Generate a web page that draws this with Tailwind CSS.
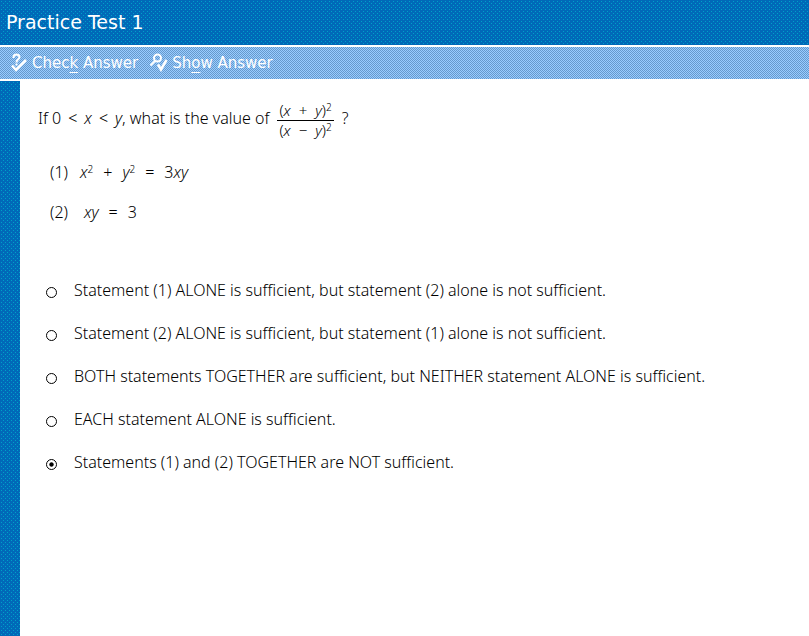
<!DOCTYPE html>
<html lang="en">
  <head>
    <meta charset="UTF-8" />
    <meta name="viewport" content="width=device-width, initial-scale=1.0" />
    <title>Practice Test 1</title>
    <script src="https://cdn.jsdelivr.net/npm/@tailwindcss/browser@4"></script>
    <style>
      .dots {
        background:
          conic-gradient(at 1px 1px, transparent 75%, #00a0c8 0) 1px 1px / 4px 4px,
          conic-gradient(at 1px 1px, transparent 75%, #00a0c8 0) 3px 3px / 4px 4px,
          #0069b8;
      }
      .checks {
        background: repeating-conic-gradient(#6699cc 0 25%, #99ccff 0 50%) 0 0 / 2px 2px;
      }
    </style>
  </head>
  <body class="flex min-h-screen flex-col bg-white font-['Noto_Sans',sans-serif] text-black">
    <header class="dots flex h-[45px] items-center px-1.5">
      <h1 class="font-['DejaVu_Sans',sans-serif] text-[19px] text-white">Practice Test 1</h1>
    </header>

    <nav class="checks my-0.5 flex h-8 items-center gap-3 px-2.5 font-['DejaVu_Sans',sans-serif] text-[15px] text-white">
      <button type="button" accesskey="k" class="flex items-center gap-1">
        <svg class="h-5 w-[18px]" viewBox="0 0 18 20" fill="none" stroke="white">
          <path d="M3.500 5V4Q4 1.500 6.500 1.500T9.500 4Q9.500 5.500 8 6.500T6.500 9.500" stroke-width="2" />
          <path d="M5.500 10.500h2v2h-2z" fill="white" stroke="none" />
          <path d="M2 12.500l4 4.500L16 7" stroke-width="2.500" />
        </svg>
        <span>Chec<u class="underline-offset-4">k</u> Answer</span>
      </button>
      <button type="button" accesskey="o" class="flex items-center gap-1">
        <svg class="h-5 w-[18px]" viewBox="0 0 18 20" fill="none" stroke="white">
          <circle cx="7.500" cy="5" r="3.500" stroke-width="2" />
          <path d="M5 8L0.500 12.500" stroke-width="2" />
          <path d="M8 11.500l3 5L16.500 7" stroke-width="2.500" />
        </svg>
        <span>Sh<u class="underline-offset-4">o</u>w Answer</span>
      </button>
    </nav>

    <div class="flex grow">
      <aside class="dots w-5 shrink-0"></aside>

      <main class="grow px-[18px] pt-5 font-light">
        <!-- Question -->
        <div class="flex gap-2">
          <p class="flex gap-[7px] pt-[5px]">
            <span>If 0</span> <span>&lt;</span> <i>x</i> <span>&lt;</span>
            <span><i>y</i>, what is the value of</span>
          </p>
          <div class="text-[15px] leading-[19px]">
            <div class="flex gap-2 border-b border-black px-0.5">
              <span>(<i>x</i></span> <span>+</span>
              <span><i>y</i>)<sup class="text-[10px]">2</sup></span>
            </div>
            <div class="flex gap-2 px-0.5">
              <span>(<i>x</i></span> <span>&minus;</span>
              <span><i>y</i>)<sup class="text-[10px]">2</sup></span>
            </div>
          </div>
          <span class="pt-[5px]">?</span>
        </div>

        <!-- Statements -->
        <div class="mt-5 ml-3 space-y-4">
          <div class="flex gap-2.5">
            <span class="w-5">(1)</span>
            <span><i>x</i><sup class="text-[10px]">2</sup></span>
            <span>+</span>
            <span><i>y</i><sup class="text-[10px]">2</sup></span>
            <span>=</span>
            <span>3<i>xy</i></span>
          </div>
          <div class="flex gap-2.5">
            <span class="w-6">(2)</span>
            <span><i>xy</i></span>
            <span>=</span>
            <span>3</span>
          </div>
        </div>

        <!-- Choices -->
        <form class="mt-[54px] ml-2 space-y-[19px]">
          <label class="flex items-center gap-[17px]">
            <input type="radio" name="answer" class="mt-1 size-[11px] shrink-0 appearance-none rounded-full border border-black checked:bg-radial checked:from-black checked:from-25% checked:to-white checked:to-40%" />
            Statement (1) ALONE is sufficient, but statement (2) alone is not sufficient.
          </label>
          <label class="flex items-center gap-[17px]">
            <input type="radio" name="answer" class="mt-1 size-[11px] shrink-0 appearance-none rounded-full border border-black checked:bg-radial checked:from-black checked:from-25% checked:to-white checked:to-40%" />
            Statement (2) ALONE is sufficient, but statement (1) alone is not sufficient.
          </label>
          <label class="flex items-center gap-[17px]">
            <input type="radio" name="answer" class="mt-1 size-[11px] shrink-0 appearance-none rounded-full border border-black checked:bg-radial checked:from-black checked:from-25% checked:to-white checked:to-40%" />
            BOTH statements TOGETHER are sufficient, but NEITHER statement ALONE is sufficient.
          </label>
          <label class="flex items-center gap-[17px]">
            <input type="radio" name="answer" class="mt-1 size-[11px] shrink-0 appearance-none rounded-full border border-black checked:bg-radial checked:from-black checked:from-25% checked:to-white checked:to-40%" />
            EACH statement ALONE is sufficient.
          </label>
          <label class="flex items-center gap-[17px]">
            <input type="radio" name="answer" checked class="mt-1 size-[11px] shrink-0 appearance-none rounded-full border border-black checked:bg-radial checked:from-black checked:from-25% checked:to-white checked:to-40%" />
            Statements (1) and (2) TOGETHER are NOT sufficient.
          </label>
        </form>
      </main>
    </div>
  </body>
</html>
